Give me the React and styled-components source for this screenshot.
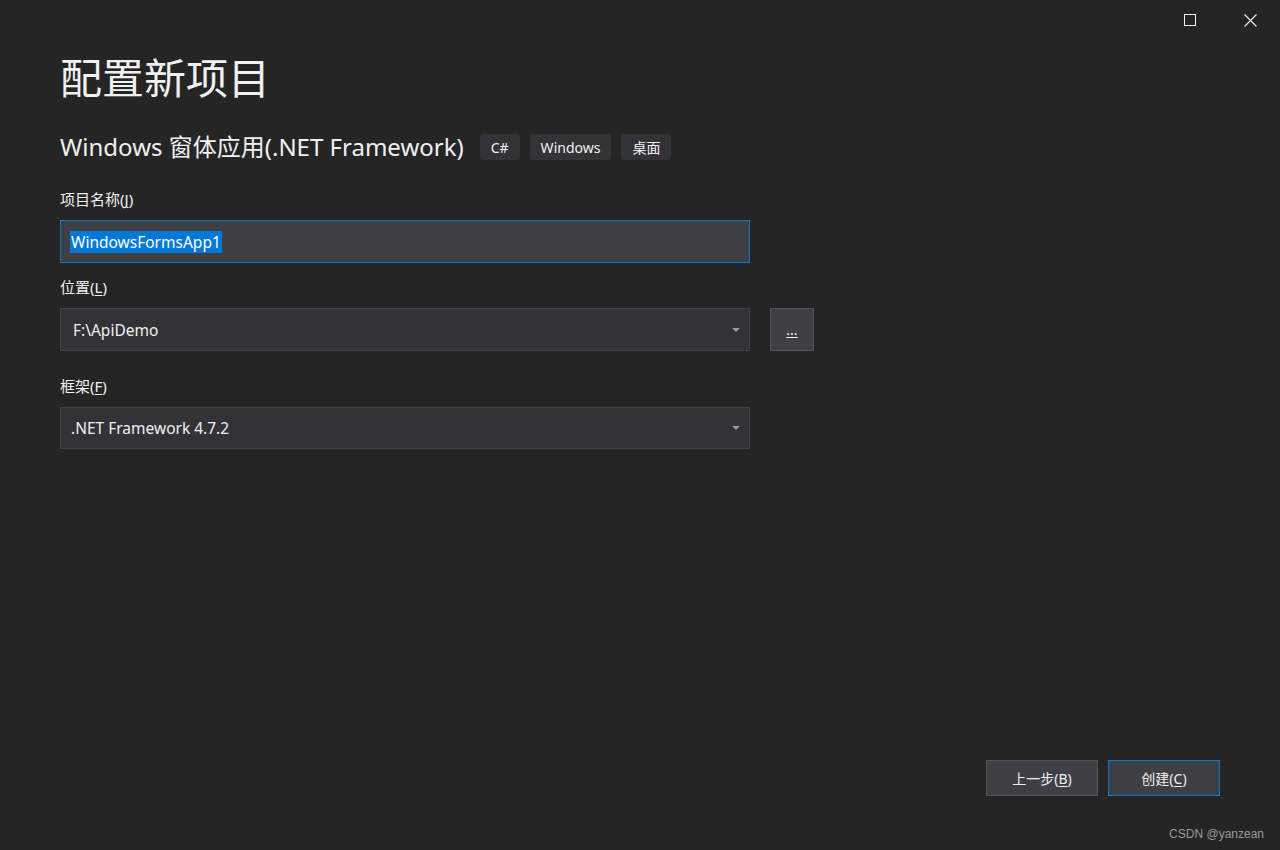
import React from "react";
import styled, { createGlobalStyle } from "styled-components";

const Global = createGlobalStyle`
  html, body {
    margin: 0;
    padding: 0;
    background: #252526;
  }
  body {
    font-family: "Noto Sans", "Noto Sans CJK SC", sans-serif;
    color: #f1f1f1;
  }
`;

const Window = styled.div`
  width: 1280px;
  height: 850px;
  background: #252526;
  display: flex;
  flex-direction: column;
  box-sizing: border-box;
  position: relative;
`;

const TitleBar = styled.div`
  display: flex;
  justify-content: flex-end;
  height: 40px;
`;

const CtrlButton = styled.div`
  width: 60px;
  height: 40px;
  display: flex;
  align-items: center;
  justify-content: center;
  color: #f1f1f1;
`;

const Body = styled.div`
  flex: 1;
  display: flex;
  flex-direction: column;
  padding: 0 60px;
`;

const Heading = styled.h1`
  margin: 8px 0 0 0;
  font-family: "Noto Sans CJK SC", sans-serif;
  font-weight: 400;
  font-size: 42px;
  line-height: 56px;
  color: #f1f1f1;
`;

const SubRow = styled.div`
  display: flex;
  align-items: center;
  gap: 10px;
  margin-top: 28px;
`;

const SubTitle = styled.div`
  font-family: "Noto Sans", "Noto Sans CJK SC", sans-serif;
  font-size: 24px;
  line-height: 30px;
  margin-right: 6px;
  color: #f1f1f1;
`;

const Tag = styled.span`
  display: inline-flex;
  align-items: center;
  height: 26px;
  padding: 0 11px;
  background: #333337;
  border-radius: 3px;
  font-size: 14px;
  color: #f1f1f1;
`;

const Label = styled.label`
  display: block;
  font-family: "Noto Sans", "Noto Sans CJK SC", sans-serif;
  font-size: 15px;
  line-height: 20px;
  color: #f1f1f1;
  margin-top: ${(p) => p.$top}px;
  u {
    text-decoration: underline;
    text-underline-offset: 2px;
  }
`;

const FieldRow = styled.div`
  display: flex;
  gap: 20px;
  margin-top: 11px;
`;

const Field = styled.div`
  width: 690px;
  height: ${(p) => p.$h || 43}px;
  box-sizing: border-box;
  display: flex;
  align-items: center;
  justify-content: space-between;
  padding: 0 9px 0 ${(p) => p.$pad}px;
  background: ${(p) => (p.$focused ? "#3f3f46" : "#333337")};
  border: 1px solid ${(p) => (p.$focused ? "#007acc" : "#434346")};
  font-size: 15.5px;
  color: #f1f1f1;
`;

const Selected = styled.span`
  background: #0078d7;
  color: #ffffff;
  padding: 0 1px;
  line-height: 22px;
`;

const Arrow = styled.span`
  width: 0;
  height: 0;
  border-left: 4px solid transparent;
  border-right: 4px solid transparent;
  border-top: 4px solid #999999;
`;

const Browse = styled.div`
  width: 44px;
  height: 43px;
  box-sizing: border-box;
  background: #3f3f46;
  border: 1px solid #555555;
  display: flex;
  align-items: center;
  justify-content: center;
  font-size: 14px;
  color: #f1f1f1;
  u {
    text-underline-offset: 2px;
  }
`;

const Footer = styled.div`
  margin-top: auto;
  display: flex;
  justify-content: flex-end;
  gap: 10px;
  padding: 0 60px 54px 0;
`;

const Button = styled.div`
  width: 112px;
  height: 36px;
  box-sizing: border-box;
  display: flex;
  align-items: center;
  justify-content: center;
  background: #3f3f46;
  border: 1px solid ${(p) => (p.$primary ? "#007acc" : "#555555")};
  font-size: 14px;
  color: #f1f1f1;
  u {
    text-underline-offset: 2px;
  }
`;

const Watermark = styled.div`
  position: absolute;
  right: 16px;
  bottom: 9px;
  font-family: "Liberation Sans", Arial, sans-serif;
  font-size: 12px;
  color: #9a9a9a;
`;

export default function App() {
  return (
    <Window>
      <Global />
      <TitleBar>
        <CtrlButton>
          <svg width="12" height="12" viewBox="0 0 12 12">
            <rect x="0.5" y="0.5" width="11" height="11" fill="none" stroke="#f1f1f1" strokeWidth="1" />
          </svg>
        </CtrlButton>
        <CtrlButton>
          <svg width="13" height="13" viewBox="0 0 13 13">
            <path d="M0.5 0.5 L12.5 12.5 M12.5 0.5 L0.5 12.5" stroke="#f1f1f1" strokeWidth="1.1" />
          </svg>
        </CtrlButton>
      </TitleBar>
      <Body>
        <Heading>配置新项目</Heading>
        <SubRow>
          <SubTitle>Windows 窗体应用(.NET Framework)</SubTitle>
          <Tag>C#</Tag>
          <Tag>Windows</Tag>
          <Tag>桌面</Tag>
        </SubRow>
        <Label $top={27}>
          项目名称(<u>J</u>)
        </Label>
        <FieldRow>
          <Field $focused $pad={9}>
            <Selected>WindowsFormsApp1</Selected>
          </Field>
        </FieldRow>
        <Label $top={14}>
          位置(<u>L</u>)
        </Label>
        <FieldRow>
          <Field $pad={12}>
            <span>F:\ApiDemo</span>
            <Arrow />
          </Field>
          <Browse>
            <u>...</u>
          </Browse>
        </FieldRow>
        <Label $top={25}>
          框架(<u>F</u>)
        </Label>
        <FieldRow>
          <Field $pad={10} $h={42}>
            <span>.NET Framework 4.7.2</span>
            <Arrow />
          </Field>
        </FieldRow>
      </Body>
      <Footer>
        <Button>
          上一步(<u>B</u>)
        </Button>
        <Button $primary>
          创建(<u>C</u>)
        </Button>
      </Footer>
      <Watermark>CSDN @yanzean</Watermark>
    </Window>
  );
}
